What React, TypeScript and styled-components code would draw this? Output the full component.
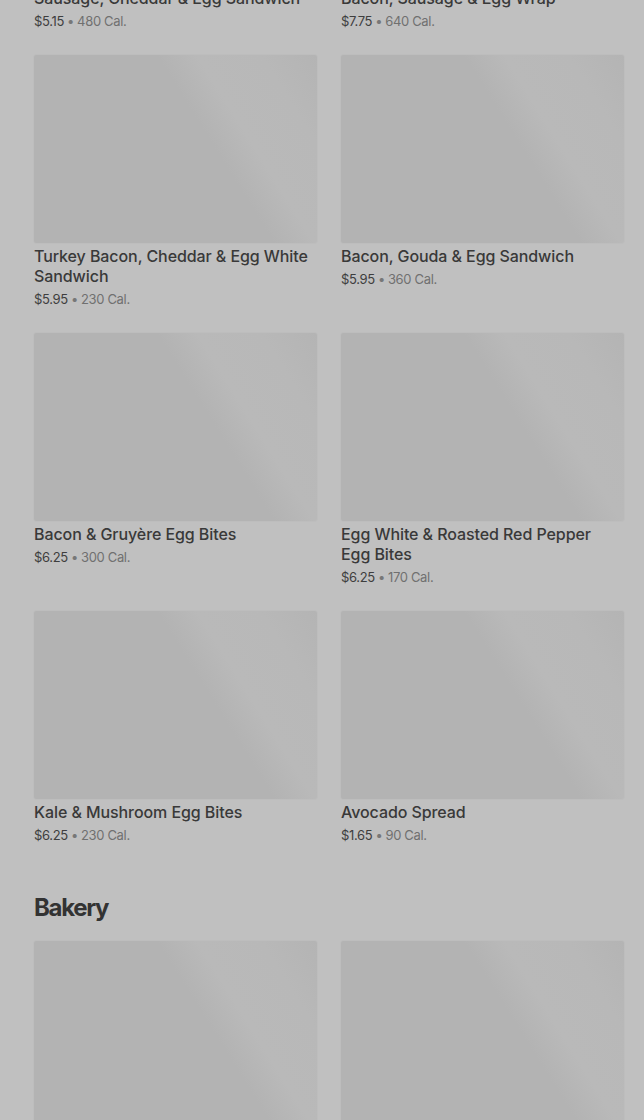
import React from "react";
import styled, { createGlobalStyle } from "styled-components";

const Global = createGlobalStyle`
  html, body { margin: 0; padding: 0; background: #c0c0c0; }
  body { font-family: Inter, "Noto Sans", sans-serif; -webkit-font-smoothing: antialiased; }
`;

const Page = styled.main`
  padding: 0 20px 0 34px;
  margin-top: -203px;
`;

const Section = styled.section`
  & + & { padding-top: 47px; }
`;

const Heading = styled.h2`
  margin: 0 0 17px;
  font-size: 24px;
  line-height: 32px;
  font-weight: 700;
  letter-spacing: -0.055em;
  color: #333333;
`;

const Grid = styled.div`
  display: grid;
  grid-template-columns: 1fr 1fr;
  column-gap: 24px;
  row-gap: 24px;
  align-items: start;
`;

const Card = styled.article`
  display: flex;
  flex-direction: column;
`;

const Image = styled.div`
  height: 188px;
  border-radius: 2px;
  background: linear-gradient(58deg, #b3b3b3 0%, #b3b3b3 60%, #b9b9b9 70%, #b8b8b8 86%, #b4b4b4 100%);
  box-shadow: 0 0 2px rgba(0, 0, 0, 0.06);
`;

const Title = styled.h3`
  margin: 3px 0 0;
  font-size: 16px;
  line-height: 20px;
  font-weight: 500;
  letter-spacing: -0.005em;
  color: #393939;
`;

const Meta = styled.p`
  margin: 3px 0 0;
  height: 20px;
  font-size: 13px;
  line-height: 20px;
  letter-spacing: -0.025em;
  color: #707070;
`;

const Price = styled.span`
  color: #3e3e3e;
`;

const Dot = styled.span`
  margin: 0 3px;
  line-height: 0;
  color: #777777;
`;

type Item = { name: string; price: string; cal: string };

const breakfast: Item[] = [
  { name: "Sausage, Cheddar & Egg Sandwich", price: "$5.15", cal: "480" },
  { name: "Bacon, Sausage & Egg Wrap", price: "$7.75", cal: "640" },
  { name: "Turkey Bacon, Cheddar & Egg White Sandwich", price: "$5.95", cal: "230" },
  { name: "Bacon, Gouda & Egg Sandwich", price: "$5.95", cal: "360" },
  { name: "Bacon & Gruyère Egg Bites", price: "$6.25", cal: "300" },
  { name: "Egg White & Roasted Red Pepper Egg Bites", price: "$6.25", cal: "170" },
  { name: "Kale & Mushroom Egg Bites", price: "$6.25", cal: "230" },
  { name: "Avocado Spread", price: "$1.65", cal: "90" },
];

const bakery: Item[] = [
  { name: "Butter Croissant", price: "$3.45", cal: "260" },
  { name: "Chocolate Croissant", price: "$3.75", cal: "300" },
];

const ItemCard = ({ item }: { item: Item }) => (
  <Card>
    <Image />
    <Title>{item.name}</Title>
    <Meta>
      <Price>{item.price}</Price>
      <Dot>•</Dot>
      {item.cal} Cal.
    </Meta>
  </Card>
);

export default function App() {
  return (
    <>
      <Global />
      <Page>
        <Section>
          <Grid>
            {breakfast.map((it) => (
              <ItemCard key={it.name} item={it} />
            ))}
          </Grid>
        </Section>
        <Section>
          <Heading>Bakery</Heading>
          <Grid>
            {bakery.map((it) => (
              <ItemCard key={it.name} item={it} />
            ))}
          </Grid>
        </Section>
      </Page>
    </>
  );
}
